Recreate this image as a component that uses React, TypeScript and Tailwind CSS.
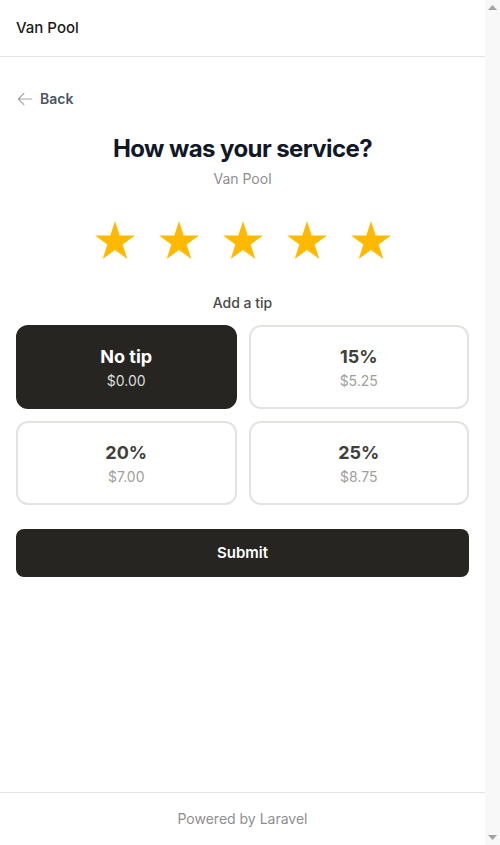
import { useState } from "react";

const tips = [
  { label: "No tip", amount: "$0.00" },
  { label: "15%", amount: "$5.25" },
  { label: "20%", amount: "$7.00" },
  { label: "25%", amount: "$8.75" },
];

function Star() {
  return (
    <svg width="40" height="40" viewBox="0 0 40 40" aria-hidden="true">
      <polygon
        fill="#ffb900"
        points="20,0 24.71,14.51 39.97,14.51 27.63,23.48 32.35,37.99 20,29.02 7.65,37.99 12.37,23.48 0.03,14.51 15.29,14.51"
      />
    </svg>
  );
}

// the browser's scrollbar strip seen in the screenshot
function ScrollStrip() {
  return (
    <div className="flex w-[15px] shrink-0 flex-col items-center justify-between bg-[#f8f8f8] py-[5px]">
      <svg width="9" height="5" viewBox="0 0 9 5">
        <polygon points="4.5,0 9,5 0,5" fill="#a3a3a3" />
      </svg>
      <svg width="9" height="5" viewBox="0 0 9 5">
        <polygon points="0,0 9,0 4.5,5" fill="#a3a3a3" />
      </svg>
    </div>
  );
}

export default function App() {
  const [selected, setSelected] = useState(0);

  return (
    <div
      className="flex min-h-[845px] bg-white text-[#1b1b18]"
      style={{ fontFamily: "Inter, 'Noto Sans', sans-serif" }}
    >
      <div className="flex flex-1 flex-col">
        {/* header */}
        <header className="flex h-[57px] items-center border-b border-[#e3e3e0] px-4">
          <span className="text-[15px] font-medium text-[#1b1b18]">Van Pool</span>
        </header>

        <main className="flex-1 px-4 pt-8">
          <button className="flex items-center gap-1.5 text-sm font-semibold text-[#4b5563]">
            <svg width="18" height="18" viewBox="0 0 24 24" fill="none" stroke="#a3a3a3" strokeWidth="1.5">
              <path d="M10.5 19.5 3 12m0 0 7.5-7.5M3 12h18" strokeLinecap="round" strokeLinejoin="round" />
            </svg>
            Back
          </button>

          <h1 className="mt-6 text-center text-2xl font-bold tracking-tight text-[#111827]">
            How was your service?
          </h1>
          <p className="mt-1 text-center text-sm text-[#8f8f8f]">Van Pool</p>

          <div className="mt-8 flex justify-center gap-6">
            {Array.from({ length: 5 }).map((_, i) => (
              <button key={i} className="h-10 w-10">
                <Star />
              </button>
            ))}
          </div>

          <p className="mt-8 text-center text-sm font-medium text-[#4a4a45]">Add a tip</p>

          <div className="mt-3 grid grid-cols-2 gap-3">
            {tips.map((tip, i) => {
              const active = i === selected;
              return (
                <button
                  key={tip.label}
                  onClick={() => setSelected(i)}
                  className={
                    active
                      ? "flex flex-col items-center rounded-xl border-2 border-[#262522] bg-[#262522] py-4"
                      : "flex flex-col items-center rounded-xl border-2 border-[#e3e3e0] bg-white py-4"
                  }
                >
                  <span className={active ? "text-lg font-bold text-white" : "text-lg font-bold text-[#3f3f3c]"}>
                    {tip.label}
                  </span>
                  <span className={active ? "text-sm text-[#dcdcdc]" : "text-sm text-[#a1a09a]"}>
                    {tip.amount}
                  </span>
                </button>
              );
            })}
          </div>

          <button className="mt-6 h-12 w-full rounded-lg bg-[#262522] text-[15px] font-semibold text-white">
            Submit
          </button>
        </main>

        <footer className="border-t border-[#e3e3e0] py-4 text-center text-sm text-[#8f8f8f]">
          Powered by Laravel
        </footer>
      </div>
      <ScrollStrip />
    </div>
  );
}
